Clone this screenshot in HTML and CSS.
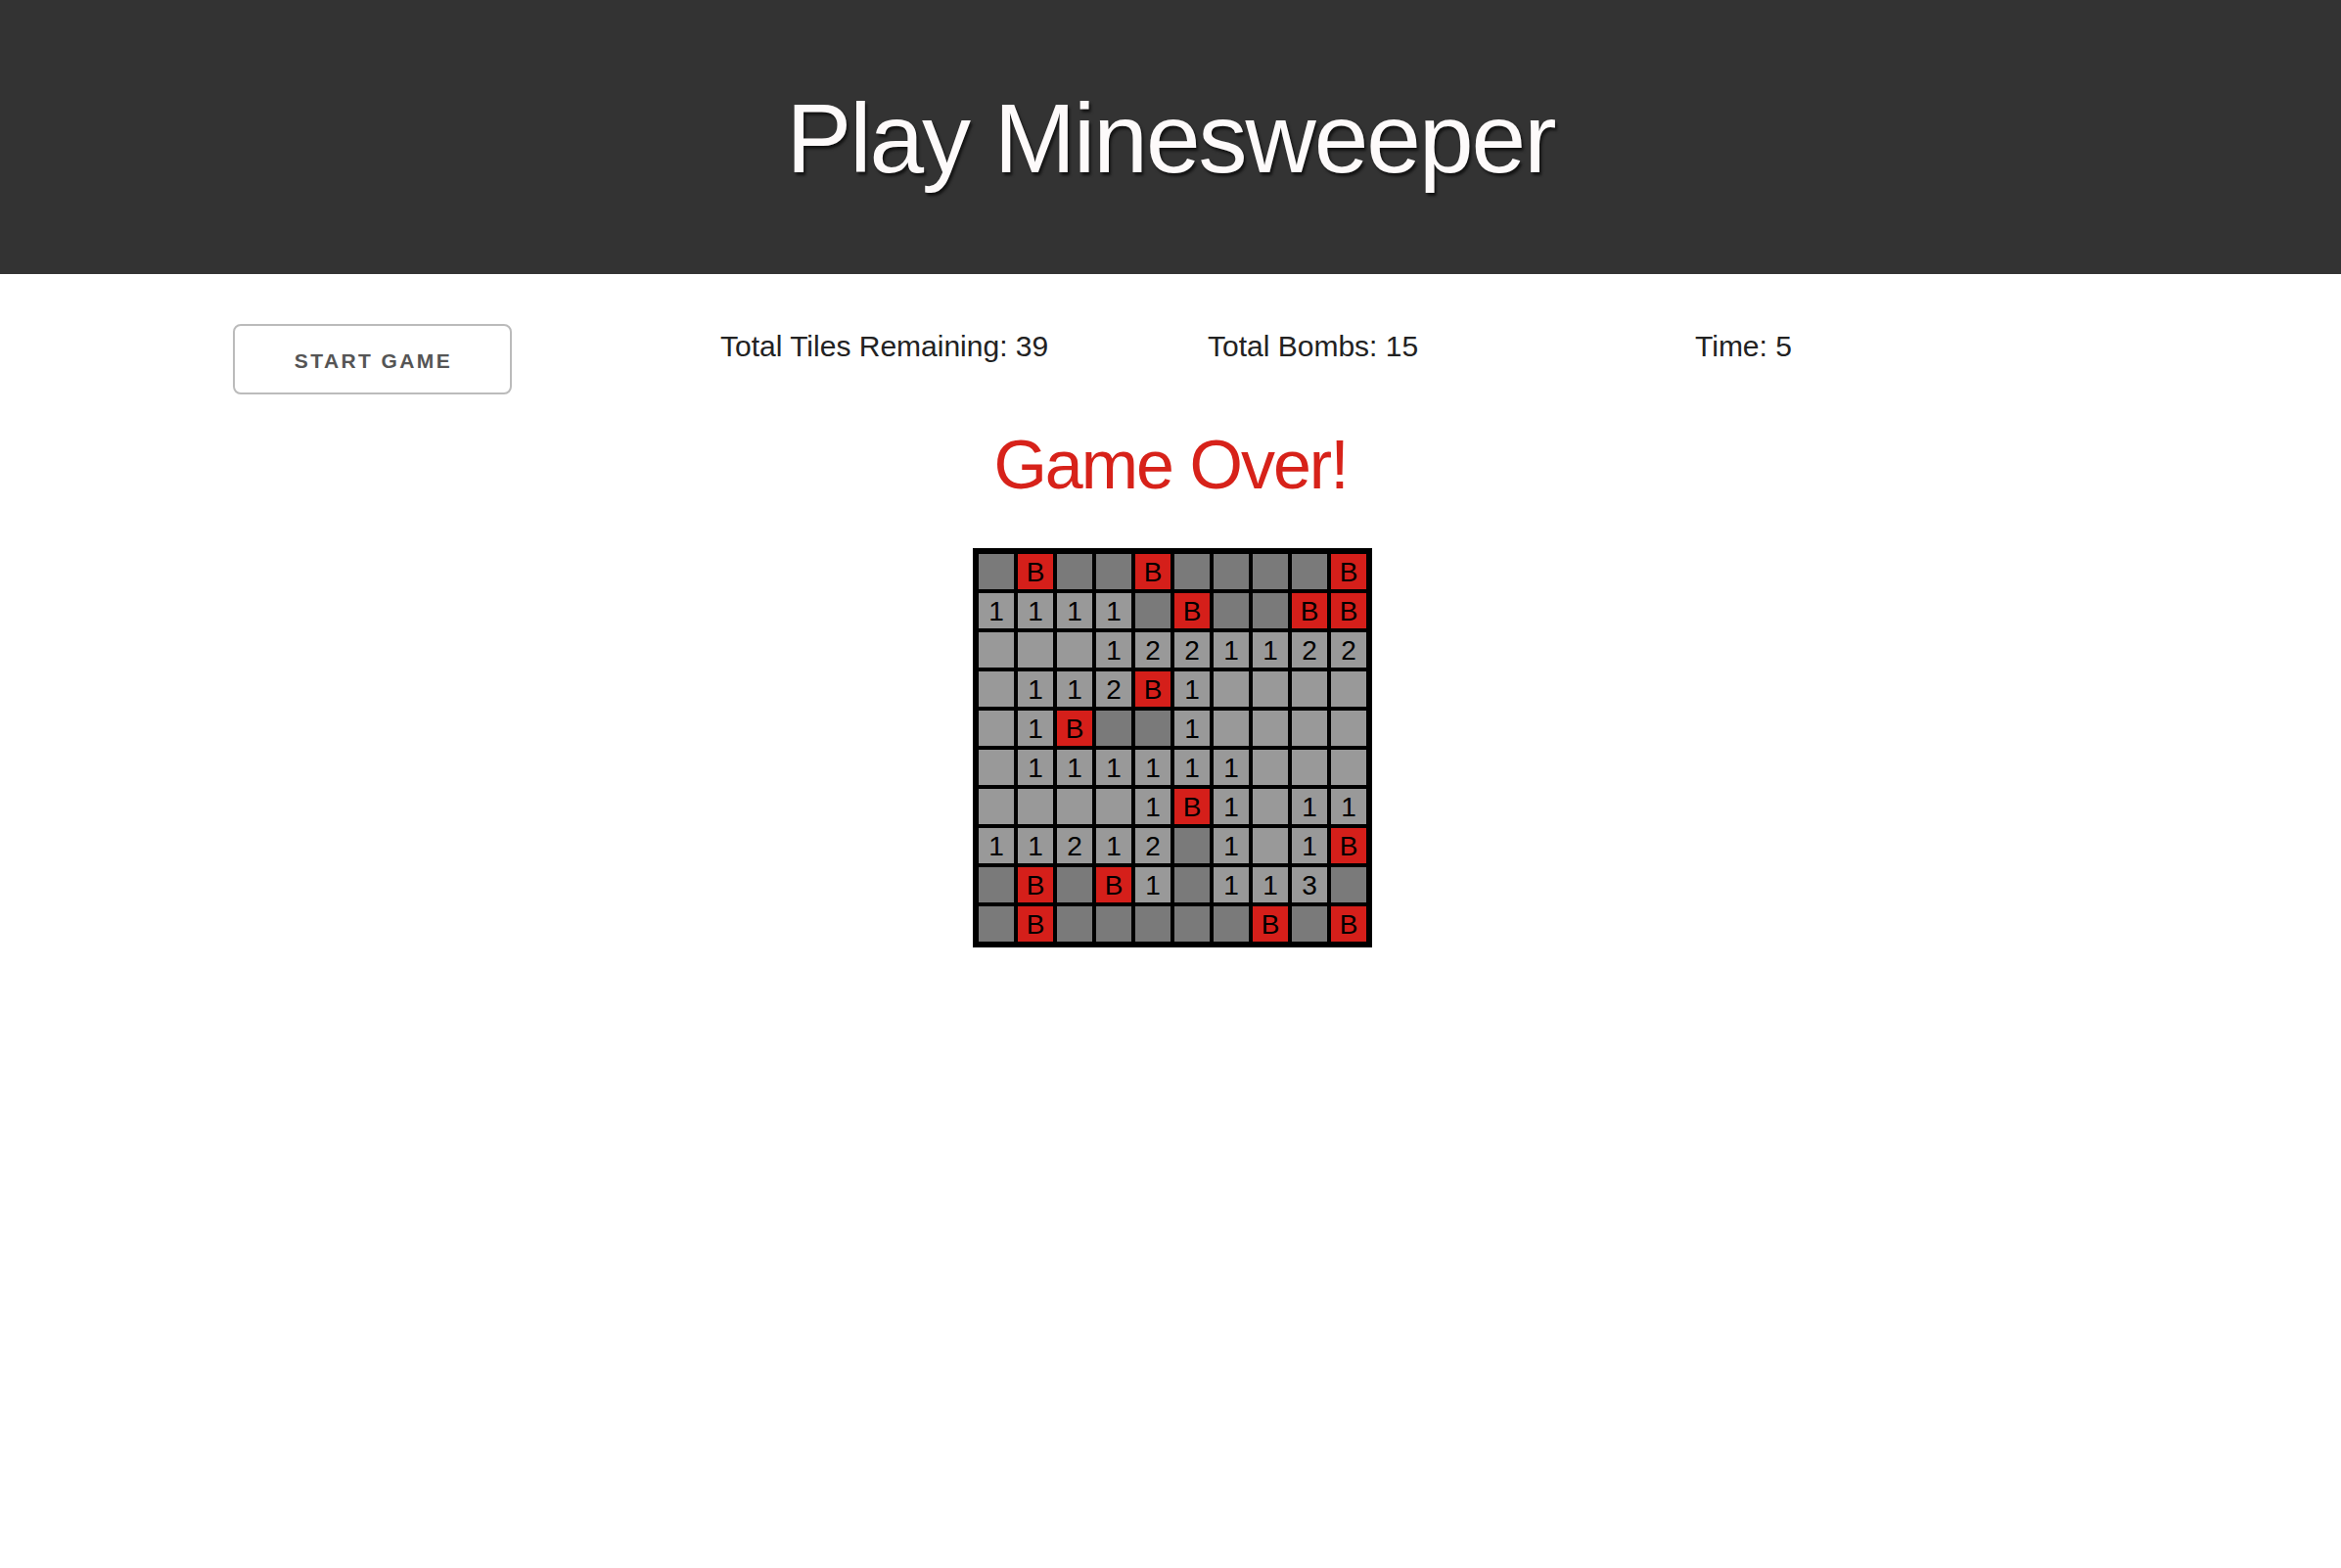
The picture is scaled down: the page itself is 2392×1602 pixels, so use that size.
FILE: index.html
```html
<!DOCTYPE html>
<html>
<head>
<meta charset="utf-8">
<title>Play Minesweeper</title>
<link rel="stylesheet" href="styles.css">
</head>
<body>
<header class="top">
  <h1 class="title">Play Minesweeper</h1>
</header>
<main class="container">
  <div class="stats">
    <div class="col"><button class="btn">START GAME</button></div>
    <div class="col stat">Total Tiles Remaining: 39</div>
    <div class="col stat">Total Bombs: 15</div>
    <div class="col stat">Time: 5</div>
  </div>
  <h2 class="over">Game Over!</h2>
  <div class="board">
    <div class="cell d"></div><div class="cell b">B</div><div class="cell d"></div><div class="cell d"></div><div class="cell b">B</div><div class="cell d"></div><div class="cell d"></div><div class="cell d"></div><div class="cell d"></div><div class="cell b">B</div>
    <div class="cell l">1</div><div class="cell l">1</div><div class="cell l">1</div><div class="cell l">1</div><div class="cell d"></div><div class="cell b">B</div><div class="cell d"></div><div class="cell d"></div><div class="cell b">B</div><div class="cell b">B</div>
    <div class="cell l"></div><div class="cell l"></div><div class="cell l"></div><div class="cell l">1</div><div class="cell l">2</div><div class="cell l">2</div><div class="cell l">1</div><div class="cell l">1</div><div class="cell l">2</div><div class="cell l">2</div>
    <div class="cell l"></div><div class="cell l">1</div><div class="cell l">1</div><div class="cell l">2</div><div class="cell b">B</div><div class="cell l">1</div><div class="cell l"></div><div class="cell l"></div><div class="cell l"></div><div class="cell l"></div>
    <div class="cell l"></div><div class="cell l">1</div><div class="cell b">B</div><div class="cell d"></div><div class="cell d"></div><div class="cell l">1</div><div class="cell l"></div><div class="cell l"></div><div class="cell l"></div><div class="cell l"></div>
    <div class="cell l"></div><div class="cell l">1</div><div class="cell l">1</div><div class="cell l">1</div><div class="cell l">1</div><div class="cell l">1</div><div class="cell l">1</div><div class="cell l"></div><div class="cell l"></div><div class="cell l"></div>
    <div class="cell l"></div><div class="cell l"></div><div class="cell l"></div><div class="cell l"></div><div class="cell l">1</div><div class="cell b">B</div><div class="cell l">1</div><div class="cell l"></div><div class="cell l">1</div><div class="cell l">1</div>
    <div class="cell l">1</div><div class="cell l">1</div><div class="cell l">2</div><div class="cell l">1</div><div class="cell l">2</div><div class="cell d"></div><div class="cell l">1</div><div class="cell l"></div><div class="cell l">1</div><div class="cell b">B</div>
    <div class="cell d"></div><div class="cell b">B</div><div class="cell d"></div><div class="cell b">B</div><div class="cell l">1</div><div class="cell d"></div><div class="cell l">1</div><div class="cell l">1</div><div class="cell l">3</div><div class="cell d"></div>
    <div class="cell d"></div><div class="cell b">B</div><div class="cell d"></div><div class="cell d"></div><div class="cell d"></div><div class="cell d"></div><div class="cell d"></div><div class="cell b">B</div><div class="cell d"></div><div class="cell b">B</div>
  </div>
</main>
</body>
</html>
```
FILE: styles.css
```css
html, body {
  margin: 0;
  padding: 0;
  background: #ffffff;
  font-family: "Liberation Sans", Arial, Helvetica, sans-serif;
}

.top {
  box-sizing: border-box;
  height: 280px;
  padding-top: 91px;
  background: #333333;
}

.title {
  margin: 0;
  text-align: center;
  font-size: 100px;
  line-height: 100px;
  font-weight: normal;
  letter-spacing: -2px;
  color: #fdfafa;
  text-shadow: 2px 3px 3px rgba(0, 0, 0, 0.65);
}

.container {
  width: 1916px;
  margin: 0 auto;
}

.stats {
  margin-top: 51px;
  display: grid;
  grid-template-columns: repeat(4, 421px);
  column-gap: 77px;
  align-items: start;
}

.btn {
  box-sizing: border-box;
  width: 285px;
  height: 72px;
  padding: 4px 0 0 0;
  background: transparent;
  border: 2px solid #bbbbbb;
  border-radius: 8px;
  color: #555555;
  font-family: "Liberation Sans", Arial, sans-serif;
  font-weight: bold;
  font-size: 21px;
  letter-spacing: 2.4px;
  text-indent: 2px;
  cursor: pointer;
}

.stat {
  font-size: 30px;
  line-height: 46px;
  color: #222222;
}

.over {
  margin: 37px 0 0 0;
  text-align: center;
  font-size: 70px;
  line-height: 70px;
  font-weight: normal;
  letter-spacing: -2px;
  color: #d7221a;
}

.board {
  margin: 50px auto 0 auto;
  width: max-content;
  position: relative;
  left: 2px;
  display: grid;
  grid-template-columns: repeat(10, 40px);
  grid-auto-rows: 40px;
  border: 4px solid #000000;
  background: #000000;
}

.cell {
  box-sizing: border-box;
  border: 2px solid #000000;
  font-size: 28px;
  line-height: 37px;
  text-align: center;
  color: #000000;
}

.d { background: #7a7a7a; }
.l { background: #999999; }
.b { background: #d51f1a; }
```
